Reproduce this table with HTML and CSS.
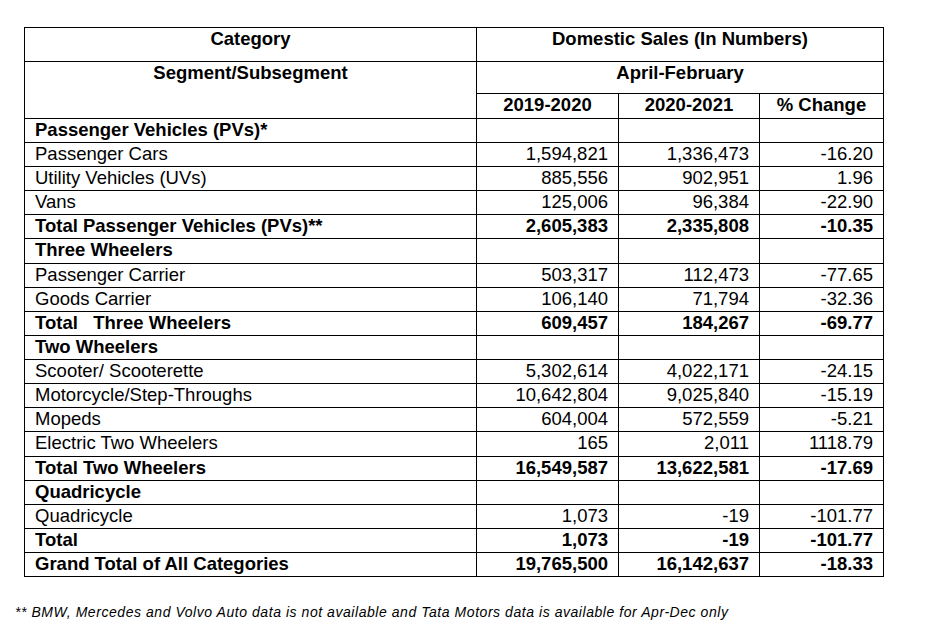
FILE: index.html
```html
<!DOCTYPE html>
<html lang="en">
<head>
<meta charset="utf-8">
<title>Domestic Sales</title>
<link rel="stylesheet" href="styles.css">
</head>
<body>
<div class="page">
<table class="sales">
  <colgroup>
    <col class="c-cat">
    <col class="c-y1">
    <col class="c-y2">
    <col class="c-pc">
  </colgroup>
  <tr class="h1">
    <td class="b center">Category</td>
    <td class="b center" colspan="3">Domestic Sales (In Numbers)</td>
  </tr>
  <tr class="h2">
    <td class="b center" rowspan="2">Segment/Subsegment</td>
    <td class="b center" colspan="3">April-February</td>
  </tr>
  <tr class="h3">
    <td class="b center">2019-2020</td>
    <td class="b center">2020-2021</td>
    <td class="b center">% Change</td>
  </tr>
  <tr class="r">
    <td class="b">Passenger Vehicles (PVs)*</td><td></td><td></td><td></td>
  </tr>
  <tr class="r">
    <td>Passenger Cars</td><td class="n">1,594,821</td><td class="n">1,336,473</td><td class="n">-16.20</td>
  </tr>
  <tr class="r">
    <td>Utility Vehicles (UVs)</td><td class="n">885,556</td><td class="n">902,951</td><td class="n">1.96</td>
  </tr>
  <tr class="r">
    <td>Vans</td><td class="n">125,006</td><td class="n">96,384</td><td class="n">-22.90</td>
  </tr>
  <tr class="r">
    <td class="b">Total Passenger Vehicles (PVs)**</td><td class="n b">2,605,383</td><td class="n b">2,335,808</td><td class="n b">-10.35</td>
  </tr>
  <tr class="r tall">
    <td class="b">Three Wheelers</td><td></td><td></td><td></td>
  </tr>
  <tr class="r">
    <td>Passenger Carrier</td><td class="n">503,317</td><td class="n">112,473</td><td class="n">-77.65</td>
  </tr>
  <tr class="r">
    <td>Goods Carrier</td><td class="n">106,140</td><td class="n">71,794</td><td class="n">-32.36</td>
  </tr>
  <tr class="r">
    <td class="b">Total &nbsp; Three Wheelers</td><td class="n b">609,457</td><td class="n b">184,267</td><td class="n b">-69.77</td>
  </tr>
  <tr class="r">
    <td class="b">Two Wheelers</td><td></td><td></td><td></td>
  </tr>
  <tr class="r">
    <td>Scooter/ Scooterette</td><td class="n">5,302,614</td><td class="n">4,022,171</td><td class="n">-24.15</td>
  </tr>
  <tr class="r">
    <td>Motorcycle/Step-Throughs</td><td class="n">10,642,804</td><td class="n">9,025,840</td><td class="n">-15.19</td>
  </tr>
  <tr class="r">
    <td>Mopeds</td><td class="n">604,004</td><td class="n">572,559</td><td class="n">-5.21</td>
  </tr>
  <tr class="r tall">
    <td>Electric Two Wheelers</td><td class="n">165</td><td class="n">2,011</td><td class="n">1118.79</td>
  </tr>
  <tr class="r">
    <td class="b">Total Two Wheelers</td><td class="n b">16,549,587</td><td class="n b">13,622,581</td><td class="n b">-17.69</td>
  </tr>
  <tr class="r">
    <td class="b">Quadricycle</td><td></td><td></td><td></td>
  </tr>
  <tr class="r">
    <td>Quadricycle</td><td class="n">1,073</td><td class="n">-19</td><td class="n">-101.77</td>
  </tr>
  <tr class="r">
    <td class="b">Total</td><td class="n b">1,073</td><td class="n b">-19</td><td class="n b">-101.77</td>
  </tr>
  <tr class="r">
    <td class="b">Grand Total of All Categories</td><td class="n b">19,765,500</td><td class="n b">16,142,637</td><td class="n b">-18.33</td>
  </tr>
</table>
<p class="note">** BMW, Mercedes and Volvo Auto data is not available and Tata Motors data is available for Apr-Dec only</p>
</div>
</body>
</html>
```

FILE: styles.css
```css
html, body {
  margin: 0;
  padding: 0;
  background: #fff;
}

.page {
  padding: 27px 0 0 24px;
  font-family: "Liberation Sans", Arial, sans-serif;
  color: #000;
}

.sales {
  border-collapse: collapse;
  table-layout: fixed;
  width: 859px;
  font-size: 18.5px;
  line-height: 21px;
}

.c-cat { width: 452px; }
.c-y1 { width: 142px; }
.c-y2 { width: 141px; }
.c-pc { width: 124px; }

.sales td {
  border: 1px solid #000;
  padding: 0 10px;
  vertical-align: top;
  white-space: nowrap;
}

.h1 { height: 34px; }
.h2 { height: 32px; }
.h3 { height: 25px; }
.r { height: 24px; }
.r.tall { height: 25px; }

.b { font-weight: bold; }
.center { text-align: center; }
.n { text-align: right; }

.note {
  margin: 27px 0 0 -9px;
  font-size: 14px;
  line-height: 16px;
  letter-spacing: 0.55px;
  font-style: italic;
  white-space: nowrap;
}
```
